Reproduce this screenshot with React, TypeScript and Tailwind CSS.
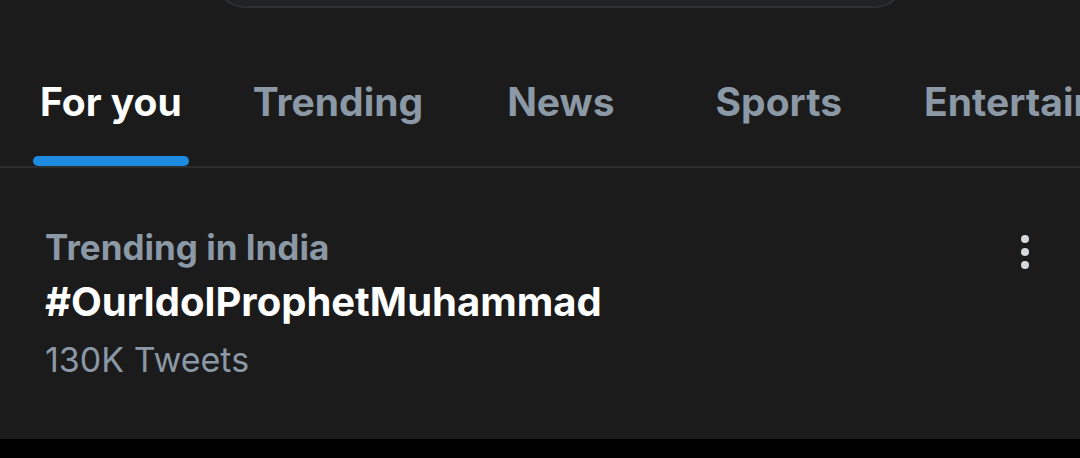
import React from "react";

const tabs = ["For you", "Trending", "News", "Sports", "Entertainment"];
const tabGap = ["ml-[33px]", "ml-[57px]", "ml-[70px]", "ml-[87px]", "ml-[68px]"];

const App = () => {
  return (
    <div
      className="w-[1080px] h-[458px] overflow-hidden bg-black flex flex-col"
      style={{ fontFamily: "Inter, 'Liberation Sans', sans-serif" }}
    >
      <div className="bg-[#1b1b1b] flex flex-col h-[439px]">
        {/* search bar, cut off at the top */}
        <div className="h-[8px] overflow-hidden flex flex-col justify-end">
          <div className="ml-[215px] w-[690px] h-[60px] shrink-0 rounded-full border-2 border-[#2c2f33] bg-[#202225]" />
        </div>

        {/* tabs */}
        <div className="flex items-end h-[160px] border-b-2 border-[#2a2c2e] whitespace-nowrap">
          {tabs.map((t, i) => (
            <div key={t} className={`${tabGap[i]} shrink-0 flex flex-col items-stretch`}>
              <span
                className={`px-[7px] text-[39px] font-bold leading-none ${
                  i === 0 ? "text-white" : "text-[#8b98a5]"
                }`}
              >
                {t}
              </span>
              <div
                className={`mt-[35px] h-[10px] rounded-full ${i === 0 ? "bg-[#1d8ce0]" : "bg-transparent"}`}
              />
            </div>
          ))}
        </div>

        {/* trend item */}
        <div className="flex justify-between pl-[45px] pr-[51px] pt-[62px]">
          <div className="flex flex-col">
            <span className="text-[35px] font-bold leading-none text-[#8b98a5]">Trending in India</span>
            <span className="mt-[17px] text-[40px] font-bold leading-none text-white">
              #OurIdolProphetMuhammad
            </span>
            <span className="mt-[21px] text-[34px] leading-none text-[#8b98a5]">130K Tweets</span>
          </div>
          <div className="flex flex-col gap-[5px] pt-[5px]">
            <div className="w-[8px] h-[8px] rounded-full bg-[#d6d9dc]" />
            <div className="w-[8px] h-[8px] rounded-full bg-[#d6d9dc]" />
            <div className="w-[8px] h-[8px] rounded-full bg-[#d6d9dc]" />
          </div>
        </div>
      </div>
    </div>
  );
};

export default App;
